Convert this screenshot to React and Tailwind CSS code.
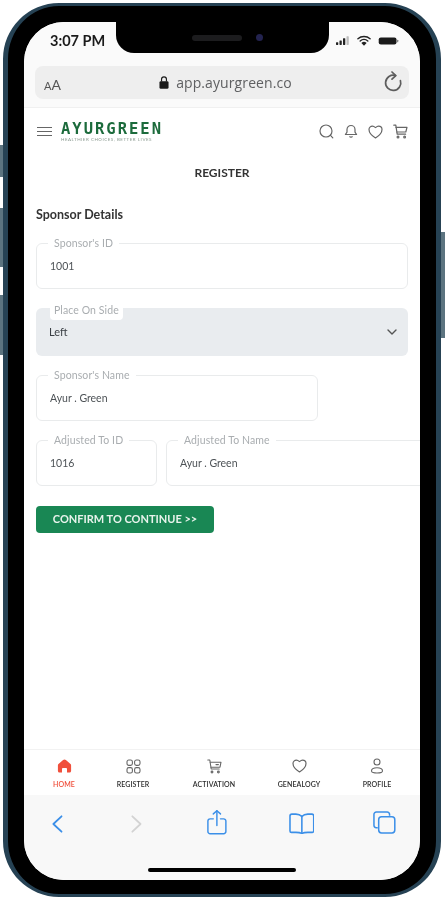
import React from "react";

const lato = { fontFamily: "Lato, 'Open Sans', sans-serif" };

const heartPath = "M7.500 13C3.500 10.500 1 7.500 1 4.500 1 2.500 2.500 1.200 4.500 1.200c1 0 2 .6 3 1.400 1-.8 2-1.400 3-1.400 2 0 3.500 1.300 3.500 3.300 0 3-2.500 6-6.500 8.500z";

const Field = ({ label, value, className = "" }) => (
  <div className={`relative h-[46px] rounded-md border border-[#e9ebec] bg-white pl-[13px] flex items-center ${className}`}>
    <span className="absolute -top-[7px] left-[11px] bg-white px-[6px] text-[10.5px] leading-[12px] tracking-[0.1px] text-[#a9adb0]">
      {label}
    </span>
    <span className="mt-[1px] text-[10.5px] text-[#4d5256]">{value}</span>
  </div>
);

const NavItem = ({ icon, label, active, className = "" }) => (
  <div className={`flex shrink-0 flex-col items-center ${className}`}>
    <div className="flex h-[20px] items-center justify-center">{icon}</div>
    <span className={`mt-[3px] text-[7px] font-semibold leading-[10px] tracking-[0.1px] ${active ? "text-[#f0503c]" : "text-[#2c2c2c]"}`}>
      {label}
    </span>
  </div>
);

export default function App() {
  return (
    <div style={lato} className="relative h-[900px] w-[445px] overflow-hidden bg-white blur-[0.6px]">
      {/* side buttons */}
      <div className="absolute left-0 top-[145px] h-[32px] w-[3px] bg-[#5c7480]" />
      <div className="absolute left-0 top-[208px] h-[59px] w-[3px] bg-[#5c7480]" />
      <div className="absolute left-0 top-[295px] h-[60px] w-[3px] bg-[#5c7480]" />
      <div className="absolute right-0 top-[232px] h-[106px] w-[4px] bg-[#5c7480]" />

      <div className="ml-[3px] mt-[3px] h-[894px] w-[438px] rounded-[56px] border-x-[5px] border-y-[3px] border-[#264254] bg-black px-[16px] pb-[14px] pt-[16px]">
        <div className="relative flex h-[858px] w-[396px] flex-col overflow-hidden rounded-[40px] bg-white">
          {/* notch */}
          <div className="absolute left-[92px] top-0 flex h-[31px] w-[213px] items-center justify-center gap-[14px] rounded-b-[18px] bg-black pl-[10px]">
            <div className="h-[6px] w-[50px] rounded-full bg-[#1c1c1e]" />
            <div className="h-[7px] w-[7px] rounded-full bg-[#23234f]" />
          </div>

          {/* status bar */}
          <div className="flex h-[44px] shrink-0 items-start justify-between bg-[#fafafa] pl-[26px] pr-[21px] pt-[10px]">
            <span className="text-[14.5px] font-bold leading-[18px] text-[#1a1a1a]">3:07 PM</span>
            <div className="flex items-center gap-[7px] pt-[3px]">
              <svg width="14" height="9" viewBox="0 0 16 10" fill="#222">
                <rect x="0" y="7" width="2.6" height="3" rx="0.6" />
                <rect x="4" y="5" width="2.6" height="5" rx="0.6" />
                <rect x="8" y="2.5" width="2.6" height="7.5" rx="0.6" />
                <rect x="12" y="0" width="2.6" height="10" rx="0.6" fill="#bbb" />
              </svg>
              <svg width="14" height="11" viewBox="0 0 15 11" fill="none" stroke="#222" strokeWidth="1.5" strokeLinecap="round">
                <path d="M1 3.6c3.6-3.2 9.4-3.2 13 0" />
                <path d="M3.4 6c2.3-2 5.9-2 8.2 0" />
                <path d="M5.8 8.2c1-.8 2.400-.8 3.400 0L7.500 10z" fill="#222" />
              </svg>
              <svg width="21" height="8" viewBox="0 0 22 9" fill="#1a1a1a">
                <rect x="0" y="0.5" width="20" height="8" rx="2.4" />
                <rect x="20.5" y="3" width="1.5" height="3" rx="0.7" fill="#888" />
              </svg>
            </div>
          </div>

          {/* url bar */}
          <div className="h-[42px] shrink-0 border-b border-[#f0f0f0] bg-[#fafafa] px-[11px]">
            <div className="relative flex h-[33px] items-center justify-center rounded-[8px] bg-[#eeeeee] pl-[7px]">
              <span className="absolute left-[9px] top-[11px] text-[14px] leading-[16px] text-[#555]">
                <span className="text-[11px]">A</span>A
              </span>
              <svg width="10" height="15" viewBox="0 0 11 15" className="mr-[7px]" fill="#1c1c1c">
                <rect x="0.5" y="6" width="10" height="8.500" rx="1.500" />
                <path d="M2.800 6.500V4a2.700 2.700 0 0 1 5.400 0v2.500" fill="none" stroke="#1c1c1c" strokeWidth="1.300" />
              </svg>
              <span className="text-[14px] leading-[18px] tracking-[0.1px] text-[#5f6062]" style={{ fontFamily: "'Open Sans', sans-serif" }}>
                app.ayurgreen.co
              </span>
              <svg width="20" height="22" viewBox="0 0 20 22" fill="none" stroke="#5d5d5d" strokeWidth="1.700" strokeLinecap="round" strokeLinejoin="round" className="absolute right-[6px] top-[5px]">
                <path d="M12.500 4.600A7.600 7.600 0 1 0 17.400 9.500" />
                <path d="M9 1l3.800 3.600L9 8.200" />
              </svg>
            </div>
          </div>

          {/* app header */}
          <div className="flex h-[41px] shrink-0 items-center bg-white pl-[13px] pr-[12px] pt-[6px]">
            <div className="flex w-[15px] flex-col gap-[2.5px]">
              <div className="h-[1.5px] bg-[#666]" />
              <div className="h-[1.5px] bg-[#666]" />
              <div className="h-[1.5px] bg-[#666]" />
            </div>
            <div className="ml-[9px] flex w-[101px] flex-col">
              <span className="whitespace-nowrap text-[15.5px] font-bold leading-[14px] tracking-[2px] text-[#1c6b3c]" style={{ fontFamily: "'DejaVu Sans Mono', monospace" }}>
                AYURGREEN
              </span>
              <span className="mt-[1px] whitespace-nowrap text-[4.5px] leading-[5px] tracking-[0.5px] text-[#8a9a90]">
                HEALTHIER CHOICES, BETTER LIVES
              </span>
            </div>
            <div className="ml-auto flex items-center gap-[10px]">
              <svg width="15" height="15" viewBox="0 0 15 15" fill="none" stroke="#666" strokeWidth="1.200" strokeLinecap="round">
                <circle cx="7" cy="7" r="6" />
                <path d="M11.500 11.300l2.300 2.500" />
              </svg>
              <svg width="14" height="15" viewBox="0 0 14 15" fill="none" stroke="#666" strokeWidth="1.200" strokeLinejoin="round">
                <path d="M7 1.500a4 4 0 0 1 4 4v2.600l1.600 2.400H1.400L3 8.100V5.500a4 4 0 0 1 4-4z" />
                <path d="M5.600 12.300a1.500 1.500 0 0 0 2.800 0" />
              </svg>
              <svg width="15" height="14" viewBox="0 0 15 14" fill="none" stroke="#666" strokeWidth="1.200" strokeLinejoin="round">
                <path d={heartPath} />
              </svg>
              <svg width="15" height="15" viewBox="0 0 15 15" fill="none" stroke="#666" strokeWidth="1.200" strokeLinecap="round" strokeLinejoin="round">
                <path d="M0.800 1.200h2l1.400 9h8.400" />
                <path d="M3 3.400h11l-1.200 4.600H3.900" />
                <circle cx="5" cy="13" r="0.900" />
                <circle cx="11.600" cy="13" r="0.900" />
              </svg>
            </div>
          </div>

          {/* page body */}
          <div className="flex flex-1 flex-col overflow-hidden bg-white pl-[12px]">
            <h1 className="mt-[16px] pr-[12px] text-center text-[12px] font-bold leading-[16px] text-[#333]">REGISTER</h1>
            <h2 className="mt-[26px] text-[12.5px] font-bold leading-[16px] text-[#333]">Sponsor Details</h2>

            <Field label="Sponsor's ID" value="1001" className="mt-[20px] w-[372px]" />

            <div className="relative mt-[19px] flex h-[48px] w-[372px] items-center justify-between rounded-md bg-[#e9ecef] pl-[13px] pr-[11px]">
              <span className="absolute -top-[5px] left-[14px] h-[17px] rounded-sm bg-white px-[4px] text-[10.5px] leading-[14px] tracking-[0.1px] text-[#a9adb0]">
                Place On Side
              </span>
              <span className="text-[11px] text-[#3a3f44]">Left</span>
              <svg width="10" height="6" viewBox="0 0 10 6" fill="none" stroke="#555" strokeWidth="1.400" strokeLinecap="round" strokeLinejoin="round">
                <path d="M1 1l4 4 4-4" />
              </svg>
            </div>

            <Field label="Sponsor's Name" value="Ayur . Green" className="mt-[19px] w-[282px]" />

            <div className="mt-[19px] flex gap-[9px]">
              <Field label="Adjusted To ID" value="1016" className="w-[121px] shrink-0" />
              <Field label="Adjusted To Name" value="Ayur . Green" className="w-[270px] shrink-0" />
            </div>

            <button className="mt-[20px] flex h-[27px] w-[178px] items-center justify-center rounded-[4px] bg-[#198754] text-[11px] font-bold text-[#e8f3ec]">
              CONFIRM TO CONTINUE &gt;&gt;
            </button>
          </div>

          {/* bottom nav */}
          <div className="flex h-[46px] shrink-0 items-start border-t border-[#f2f2f2] bg-white pl-[10px] pt-[6px]">
            <NavItem
              active
              label="HOME"
              className="w-[60px]"
              icon={
                <svg width="15" height="14" viewBox="0 0 15 14" fill="#f0503c">
                  <path d="M7.500 0.500c.5 0 1 .2 1.400.6l4.600 4c.4.3.6.8.6 1.300V12c0 .9-.7 1.500-1.500 1.500H10V9.800c0-.5-.4-.9-.9-.9H5.900c-.5 0-.9.4-.9.9v3.700H2.400c-.8 0-1.500-.6-1.500-1.500V6.400c0-.5.2-1 .6-1.300l4.600-4c.4-.4.9-.6 1.400-.6z" />
                </svg>
              }
            />
            <NavItem
              label="REGISTER"
              className="w-[78px]"
              icon={
                <svg width="15" height="15" viewBox="0 0 15 15" fill="none" stroke="#666" strokeWidth="1.100">
                  <rect x="1" y="1" width="5.400" height="5.400" rx="1.800" />
                  <rect x="8.600" y="1" width="5.400" height="5.400" rx="1.800" />
                  <rect x="1" y="8.600" width="5.400" height="5.400" rx="1.800" />
                  <rect x="8.600" y="8.600" width="5.400" height="5.400" rx="1.800" />
                </svg>
              }
            />
            <NavItem
              label="ACTIVATION"
              className="w-[84px]"
              icon={
                <svg width="15" height="15" viewBox="0 0 15 15" fill="none" stroke="#666" strokeWidth="1.100" strokeLinecap="round" strokeLinejoin="round">
                  <path d="M0.800 1h2l1.400 9h8" />
                  <path d="M3.200 3.200H14l-1 5H4" />
                  <path d="M9 5.600h2.400" />
                  <circle cx="5" cy="13" r="0.900" />
                  <circle cx="11.400" cy="13" r="0.900" />
                </svg>
              }
            />
            <NavItem
              label="GENEALOGY"
              className="w-[86px]"
              icon={
                <svg width="15" height="14" viewBox="0 0 15 14" fill="none" stroke="#666" strokeWidth="1.200" strokeLinejoin="round">
                  <path d={heartPath} />
                </svg>
              }
            />
            <NavItem
              label="PROFILE"
              className="w-[70px]"
              icon={
                <svg width="14" height="16" viewBox="0 0 14 16" fill="none" stroke="#666" strokeWidth="1.100">
                  <circle cx="7" cy="4" r="3" />
                  <path d="M1.500 13c0-2 2.400-3.200 5.500-3.200s5.500 1.200 5.500 3.200c0 1.200-2.400 2-5.500 2s-5.500-.8-5.500-2z" />
                </svg>
              }
            />
          </div>

          {/* safari toolbar */}
          <div className="relative h-[85px] shrink-0 bg-[#f8f8f8] pl-[28px] pr-[24px] pt-[17px]">
            <div className="flex items-center justify-between">
              <svg width="11" height="20" viewBox="0 0 12 20" fill="none" stroke="#3b8fe8" strokeWidth="2" strokeLinecap="round" strokeLinejoin="round">
                <path d="M10.500 1.500L1.500 10l9 8.500" />
              </svg>
              <svg width="11" height="20" viewBox="0 0 12 20" fill="none" stroke="#d3d3d3" strokeWidth="2" strokeLinecap="round" strokeLinejoin="round" className="ml-[68px]">
                <path d="M1.500 1.500l9 8.500-9 8.500" />
              </svg>
              <svg width="20" height="26" viewBox="0 0 22 28" fill="none" stroke="#3b8fe8" strokeWidth="1.600" strokeLinecap="round" strokeLinejoin="round" className="ml-[65px] -mt-[3px]">
                <path d="M7 10.500H3.500A2.500 2.500 0 0 0 1 13v11.500A2.500 2.500 0 0 0 3.500 27h15a2.500 2.500 0 0 0 2.500-2.500V13a2.500 2.500 0 0 0-2.500-2.500H15" />
                <path d="M11 18V1.500" />
                <path d="M7 5l4-3.500L15 5" />
              </svg>
              <svg width="26" height="21" viewBox="0 0 26 21" fill="none" stroke="#3b8fe8" strokeWidth="1.600" strokeLinecap="round" strokeLinejoin="round" className="ml-[62px]">
                <path d="M13 3.500C11.500 1.800 9.500 1 7 1H3a2 2 0 0 0-2 2v15a1.500 1.500 0 0 0 1.500 1.500H7c2.500 0 4.500.3 6 1 1.500-.7 3.500-1 6-1h4.500A1.500 1.500 0 0 0 25 18V3a2 2 0 0 0-2-2h-4c-2.500 0-4.500.8-6 2.500z" />
                <path d="M13 3.500V20" />
              </svg>
              <svg width="23" height="23" viewBox="0 0 24 24" fill="none" stroke="#3b8fe8" strokeWidth="1.600" strokeLinejoin="round" className="ml-[59px] -mt-[3px]">
                <path d="M5 17.500H3.500A2.500 2.500 0 0 1 1 15V3.500A2.500 2.500 0 0 1 3.500 1H15a2.500 2.500 0 0 1 2.500 2.500V5" />
                <rect x="6" y="6" width="17" height="17" rx="3" />
              </svg>
            </div>
            <div className="absolute bottom-[8px] left-[124px] h-[4px] w-[148px] rounded-full bg-black" />
          </div>
        </div>
      </div>
    </div>
  );
}
